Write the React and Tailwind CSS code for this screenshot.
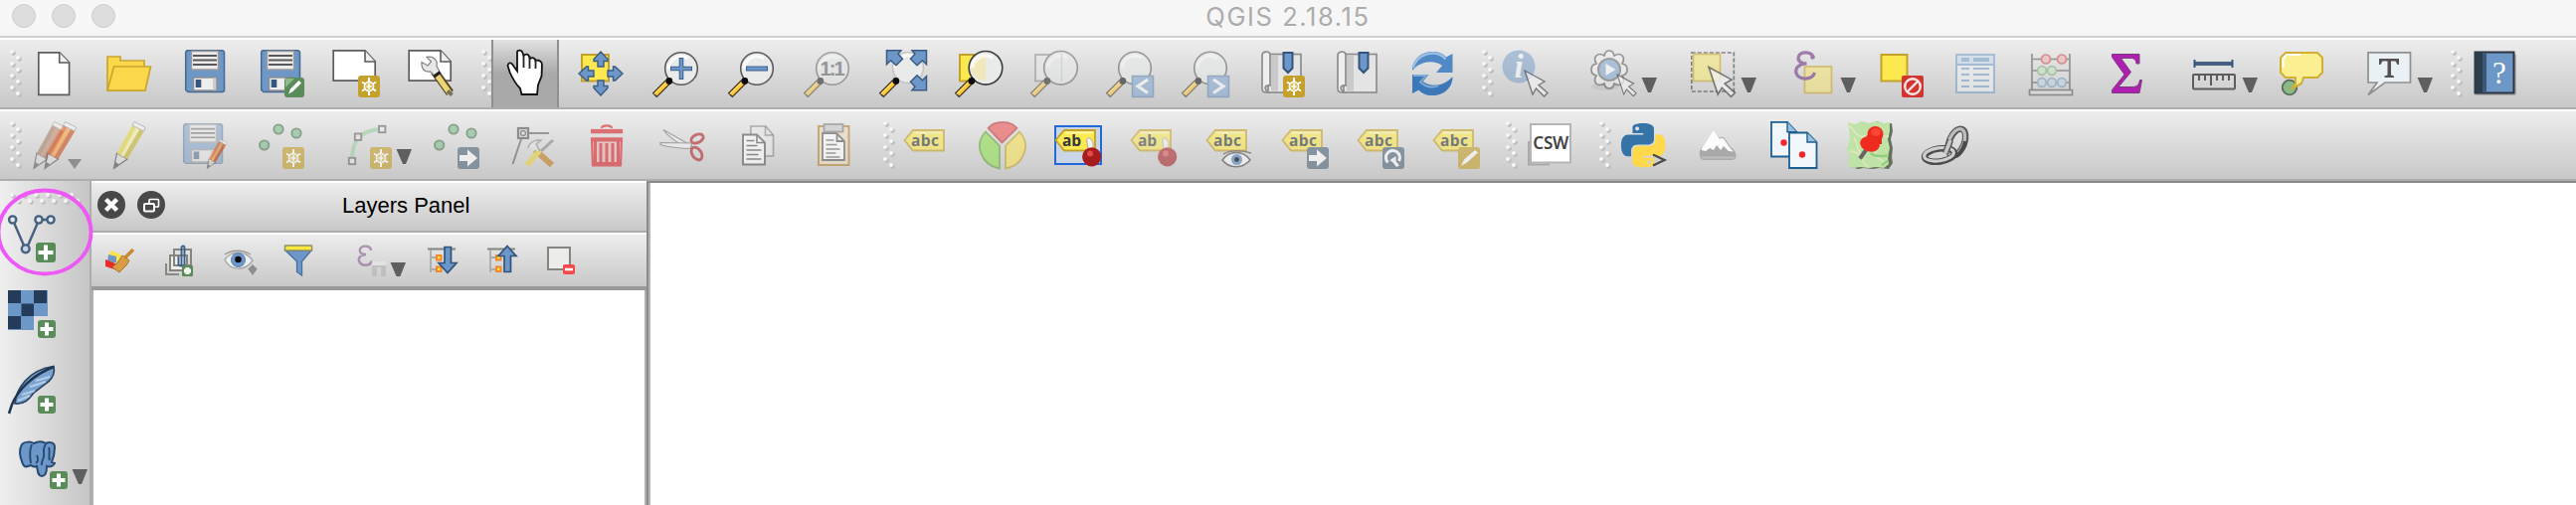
import React from 'react';

/* ---------- building blocks ---------- */

function Icon({ className = '', children }) {
  return (
    <svg viewBox="0 0 48 48" fill="none" className={'h-12 w-12 shrink-0 overflow-visible ' + className}>
      {children}
    </svg>
  );
}

function SmallIcon({ className = '', children }) {
  return (
    <svg viewBox="0 0 32 32" fill="none" className={'h-8 w-8 shrink-0 overflow-visible ' + className}>
      {children}
    </svg>
  );
}

function Dot({ x, y }) {
  return (
    <g>
      <circle cx={x + 3.6} cy={y + 3.6} r="2.2" fill="#bdbdbd" />
      <circle cx={x + 2} cy={y + 2} r="2" fill="#f6f6f6" />
    </g>
  );
}

function Handle({ className = '' }) {
  return (
    <svg viewBox="0 0 12 48" className={'h-12 w-3 shrink-0 ' + className}>
      {[0, 12, 24, 36].map((y) => (
        <g key={y}>
          <Dot x={0} y={y} />
          <Dot x={6} y={y + 6} />
        </g>
      ))}
    </svg>
  );
}

function Arrow({ className = '' }) {
  return (
    <svg viewBox="0 0 16 48" className={'h-12 w-4 shrink-0 ' + className}>
      <path d="M0.5 28h15.500l-6 15h-3z" fill="#5f5f5f" />
    </svg>
  );
}

function PlusBadge({ x = 30, y = 30, s = 18 }) {
  const c = s / 2;
  return (
    <g transform={`translate(${x} ${y})`}>
      <rect width={s} height={s} rx="3" fill="#5a8c5a" />
      <path d={`M${c} 2.5V${s - 2.5}M2.5 ${c}H${s - 2.5}`} stroke="#fff" strokeWidth="4" />
    </g>
  );
}

function StarBadge() {
  return (
    <g>
      <rect x="26" y="26" width="22" height="22" rx="3" fill="#c4a02c" />
      <path d="M37 28v18M30 32.500l14 9M44 32.500l-14 9" stroke="#fff" strokeWidth="2" />
      <circle cx="37" cy="37" r="4.600" stroke="#fff" strokeWidth="1.600" fill="#d8bd55" />
      <path d="M37 34v6M34.500 37h5" stroke="#fff" strokeWidth="1.600" />
    </g>
  );
}

function ArrowBadge() {
  return (
    <g>
      <rect x="26" y="26" width="22" height="22" rx="3" fill="#51687c" />
      <path d="M28 34h8v-5.500l10 8.500l-10 8.500V40h-8z" fill="#fff" />
    </g>
  );
}

function Floppy() {
  return (
    <g>
      <path d="M6 0.800h36l1.500 1.500v39l-1.500 1.200H7L4.700 40.500V2.300z" fill="#6c97c6" stroke="#46698f" strokeWidth="1.500" />
      <rect x="10.500" y="1.500" width="27" height="18.500" fill="#ececec" stroke="#9b9b9b" strokeWidth="1.500" />
      <path d="M12 6h24M12 10.500h24M12 15h24" stroke="#585858" strokeWidth="1.800" />
      <rect x="12.500" y="28" width="23.500" height="13" fill="#eee" stroke="#8e8e8e" strokeWidth="1.500" />
      <rect x="14.700" y="30" width="5.600" height="8" fill="#34577f" />
      <rect x="32" y="28.500" width="3" height="12" fill="#ccc" />
    </g>
  );
}

function Lens({ cx = 29, cy = 19, r = 16.3, dark = '#5a5a5a' }) {
  return (
    <g>
      <path d="M2 46L15.500 32.500" stroke="#3a3020" strokeWidth="6.500" />
      <path d="M3 45L15.500 32.500" stroke="#ffc936" strokeWidth="4" />
      <path d="M1.500 45L14 32.500" stroke="#fff1b0" strokeWidth="0.800" />
      <circle cx={cx} cy={cy} r={r} fill="#e9ebeb" stroke={dark} strokeWidth="1.600" />
      <path d={`M${cx - 13} ${cy}a13 13 0 0 1 20-10`} stroke="#fff" strokeWidth="3" opacity=".8" />
      <circle cx="16.800" cy="31.500" r="3.400" fill="#0b0b0b" />
    </g>
  );
}

function Page() {
  return (
    <g>
      <path d="M1.200 0.800h31.800l10.200 11v19.400H1.200z" fill="#fff" stroke="#5c5c5c" strokeWidth="1.700" />
      <path d="M33 1v11h10" fill="#eee" stroke="#5c5c5c" strokeWidth="1.600" />
    </g>
  );
}

function Pencil({ a = '#e86a2c', b = '#f8a13a', c = '#cc4d1c', tip = '#555' }) {
  return (
    <g>
      <path d="M16 32L26.500 38L13 47.500z" fill="#ddd" stroke={tip} strokeWidth="1.200" />
      <path d="M14.500 41l3.500 2.300l-5 4.200z" fill={tip} />
      <path d="M16 32L31.500 4l4 2.300L20 34.500z" fill={a} />
      <path d="M20 34.500L35.500 6l3.500 2l-16 28z" fill={b} />
      <path d="M22.500 36L39 8l4.200 2.200L26.500 38z" fill={c} />
      <path d="M31.500 4l2-3.500L44.500 6l-1.300 4z" fill="#f2f2f2" stroke="#9a9a9a" strokeWidth="0.900" />
    </g>
  );
}

function Points() {
  return (
    <g fill="#7fc088" stroke="#4f7455" strokeWidth="1.800">
      <circle cx="22" cy="8" r="4.700" />
      <circle cx="40" cy="12" r="4.700" />
      <circle cx="7.700" cy="24" r="4.700" />
    </g>
  );
}

function Tag({ text = 'abc' }) {
  return (
    <g>
      <path d="M1.500 19L10 9h31v20.500H10z" fill="#fce94f" stroke="#c4a02c" strokeWidth="1.800" />
      <path d="M11 11.500h28" stroke="#fff6a8" strokeWidth="2" />
      <text
        x="8"
        y="24.500"
        fontSize="15.500"
        fontWeight="700"
        fill="#33383c"
        textLength={text === 'abc' ? 28 : 19}
        className="font-['Open_Sans',sans-serif]"
      >
        {text}
      </text>
    </g>
  );
}

function Pin() {
  return (
    <g>
      <path d="M32.500 18.500l3-2l3.500 4.500v7h-5z" fill="#f4f4f4" stroke="#999" strokeWidth="0.800" />
      <circle cx="37.700" cy="35.800" r="9.600" fill="#a81c1e" />
      <circle cx="36" cy="32.500" r="3" fill="#e04a48" />
    </g>
  );
}

function Cursor({ x = 0, y = 0, s = 1 }) {
  return (
    <path
      transform={`translate(${x} ${y}) scale(${s})`}
      d="M0 0l20 11l-6 3.500l9 8l-3.500 3.500l-8-8l-3.500 6z"
      fill="#f1f1f1"
      stroke="#555"
      strokeWidth="1.400"
    />
  );
}

function NavArrow({ rotate }) {
  return (
    <path
      transform={`rotate(${rotate} 24 24)`}
      d="M24 2l7 7.500v2h-4V17h-6v-5.500h-4v-2z"
      fill="#6c97c8"
      stroke="#3b5c82"
      strokeWidth="1.400"
    />
  );
}

const CORNER = 'M7.500 .8h14.500l-3 3.500l4.500 5l-6.500 6.500l-5.500-5l-4 4z';

function BookmarkShape() {
  return (
    <g>
      <rect x="11" y="4.500" width="33" height="38.500" fill="#e4e4e4" stroke="#8d8d8d" strokeWidth="1.700" />
      <path d="M14 5.500h7v36h-7z" fill="#c9c9c9" />
      <path d="M5 6c0-5 7-5 8-1.500V36c-5-1-7 3-2 7H9c-3 0-4-2-4-4z" fill="#eee" stroke="#8d8d8d" strokeWidth="1.700" />
      <path d="M26.500 3h9v15.500l-4.500 4.500l-4.500-4.500z" fill="#6c97c8" stroke="#33547c" strokeWidth="2" />
    </g>
  );
}

/* ---------- first toolbar ---------- */

function MainToolbar() {
  return (
    <div className="flex h-[72px] shrink-0 items-center border-t-2 border-b-2 border-t-white border-b-[#adadad] bg-linear-to-b from-[#ededed] to-[#c8c8c8]">
      <Handle className="ml-2.5" />
      <Icon className="ml-2">
        <path d="M8.800 2.800h21l9.800 10v32.500H8.800z" fill="#fff" stroke="#5c5c5c" strokeWidth="1.700" />
        <path d="M29.700 3v10h9.800" fill="#eee" stroke="#5c5c5c" strokeWidth="1.600" />
      </Icon>
      <Icon className="ml-7">
        <path d="M2 41V7h13v4h24v7" fill="#fbd84b" stroke="#c9a52f" strokeWidth="1.700" />
        <path d="M8.500 17h37l-5.500 24.200H2z" fill="#fbd84b" stroke="#c9a52f" strokeWidth="1.700" />
      </Icon>
      <Icon className="ml-7"><Floppy /></Icon>
      <Icon className="ml-7">
        <Floppy />
        <rect x="28" y="28" width="20" height="20" rx="3" fill="#5a8c5a" />
        <path d="M29 38l9-9h-9z" fill="#8fb88f" />
        <path d="M32 44.500l2-5l8.500-8.500l2.500 2.500l-8.500 8.500z" fill="#fff" />
      </Icon>
      <Icon className="ml-7"><Page /><StarBadge /></Icon>
      <Icon className="ml-7">
        <Page />
        <path d="M27 22L42.500 43.500" stroke="#554a28" strokeWidth="8.500" />
        <path d="M29.500 26L42 43.500" stroke="#ecd472" strokeWidth="5.500" />
        <path d="M40 41.500l4.500 4" stroke="#77705a" strokeWidth="4" />
        <path d="M14 12.500l6 3.500l3.500-4l-4.500-4.500c7-1.500 11.500 3 10 9l3.500 6.500l-5 3.500l-5-4.500c-5 1-9-2.500-8.500-9.500z" fill="#e8e8e8" stroke="#888" strokeWidth="1.300" />
        <path d="M26.500 27l6-4.500" stroke="#222" strokeWidth="3" />
      </Icon>
      <div className="ml-[26px] w-[10px] shrink-0 overflow-hidden"><Handle /></div>
      <div className="flex h-[68px] w-[68px] shrink-0 items-center justify-center border-x-2 border-[#8f8f8f] bg-linear-to-b from-[#e2e2e2] via-[#a9a9a9] to-[#a9a9a9]">
        <Icon>
          <path
            d="M6.500 16c.5-3 3-3.500 4.500-1.500l5 7V2.500c0-2.500 4.500-2.500 5.500.5l1 3c2-2.500 5-1.500 5.500 1l1 2c2-1.500 5-1 5.500 2c3-1 6.500 0 6.500 4.500l-.5 11l-3.500 9l-1 9.500H20.500l-1.500-6C14 34 10.500 27 8.500 22.500z"
            fill="#fff" stroke="#111" strokeWidth="1.800"
          />
          <path d="M22.500 5v13M28.500 6v13M34.500 9v10" stroke="#222" strokeWidth="1.800" />
        </Icon>
      </div>
      <Icon className="ml-[18px]">
        <rect x="5" y="5" width="27" height="26.500" fill="#fce94f" stroke="#c4a02c" strokeWidth="2" />
        <NavArrow rotate={0} /><NavArrow rotate={90} /><NavArrow rotate={180} /><NavArrow rotate={270} />
      </Icon>
      <Icon className="ml-7">
        <Lens />
        <path d="M29 8v22M18 19h22" stroke="#3b5f8c" strokeWidth="4.600" />
        <path d="M29 9v20M19 19h20" stroke="#6c97c8" strokeWidth="2.600" />
      </Icon>
      <Icon className="ml-7">
        <Lens />
        <path d="M18 19h22" stroke="#3b5f8c" strokeWidth="5" />
        <path d="M19 19h20" stroke="#6c97c8" strokeWidth="3" />
      </Icon>
      <Icon className="ml-7">
        <g opacity=".5">
          <Lens />
          <text x="29" y="25.500" textAnchor="middle" fontSize="20" fontWeight="700" fill="#4c5154" textLength="25" className="font-['Liberation_Sans',sans-serif]">1:1</text>
        </g>
      </Icon>
      <Icon className="ml-7">
        <Lens cx={29} cy={18} r={15.5} dark="#c4c4c4" />
        <g fill="#6c97c8" stroke="#3b5c82" strokeWidth="1.500">
          <path d={CORNER} />
          <path transform="translate(55 0) scale(-1 1)" d={CORNER} />
          <path transform="translate(55 41.500) scale(-1 -1)" d={CORNER} />
        </g>
      </Icon>
      <Icon className="ml-7">
        <rect x="5" y="5" width="24" height="26.500" fill="#fce94f" stroke="#c4a02c" strokeWidth="2" />
        <Lens cx={31} cy={18.3} r={16.8} dark="#3c3c3c" />
        <path d="M16 19a15 15 0 0 1 15-14.500V31A14 14 0 0 1 16 19z" fill="#f0e8bb" />
        <path d="M17.500 18a13 13 0 0 1 13-12" stroke="#fff" strokeWidth="4" opacity=".7" />
      </Icon>
      <Icon className="ml-7">
        <g opacity=".5">
          <rect x="5" y="5" width="24" height="26.500" fill="#e8e8e8" stroke="#777" strokeWidth="1.600" />
          <Lens cx={30.5} cy={18.3} r={16.8} />
          <path d="M31.500 4v28" stroke="#c8c8c8" strokeWidth="1.400" />
        </g>
      </Icon>
      <Icon className="ml-7">
        <g opacity=".55">
          <Lens cy={18.5} />
          <rect x="26.500" y="26.500" width="21" height="21" fill="#7fa6d3" stroke="#5e83ad" strokeWidth="1.500" />
          <path d="M42 30l-10 6.800l10 6.700" stroke="#fff" strokeWidth="3.200" />
        </g>
      </Icon>
      <Icon className="ml-7">
        <g opacity=".55">
          <Lens cy={18.5} />
          <rect x="26.500" y="26.500" width="21" height="21" fill="#7fa6d3" stroke="#5e83ad" strokeWidth="1.500" />
          <path d="M32 30l10 6.800l-10 6.700" stroke="#fff" strokeWidth="3.200" />
        </g>
      </Icon>
      <Icon className="ml-7"><BookmarkShape /><StarBadge /></Icon>
      <Icon className="ml-7"><BookmarkShape /></Icon>
      <Icon className="ml-7">
        <path d="M4 21C4 9 14 2 24 2c7 0 11 2 14 5.500l6.500-3.500v19H28l6-7c-8-6-22-5-30 5z" fill="#5089c6" />
        <path d="M4.500 18C8 8 17 3 26 3.500c5 .5 9 3 11.500 6" stroke="#9cc0e4" strokeWidth="2.500" />
        <path d="M44.500 27C44.500 39 35 46 24.500 46c-7 0-11-2-14-5.500L4 44V25h16.500l-6 7c8 6 22 5 30-5z" fill="#3c77b8" />
        <path d="M5 26h13l-6 6.500c5 4.500 12 6 18 4" stroke="#81abd8" strokeWidth="1.800" />
      </Icon>
      <Handle className="ml-[26px]" />
      <Icon className="ml-2">
        <g opacity=".48">
          <circle cx="17" cy="17" r="16.500" fill="#6c97c8" />
          <text x="17" y="28" textAnchor="middle" fontSize="33" fontWeight="700" fontStyle="italic" fill="#fff" className="font-['Liberation_Serif',serif]">i</text>
        </g>
        <g opacity=".7"><Cursor x={23} y={21} /></g>
      </Icon>
      <Icon className="ml-10">
        <ellipse cx="16" cy="37" rx="14" ry="4" fill="#999" opacity=".2" />
        <g opacity=".55">
          <path d="M20 1q4 0 5 5q5-3 8 0q3 3 0 8q5 1 5 6t-5 6q3 5 0 8q-3 3-8 0q-1 5-5 5t-5-5q-5 3-8 0q-3-3 0-8q-5-1-5-6t5-6q-3-5 0-8q3-3 8 0q1-5 5-5z" fill="#f2f2f2" stroke="#555" strokeWidth="1.700" />
          <circle cx="20" cy="20" r="11" fill="#7fa6d3" stroke="#666" strokeWidth="2" />
          <path d="M16.500 14l10 6l-10 6z" fill="#fff" />
        </g>
        <g opacity=".7"><Cursor x={28} y={25} s={0.83} /></g>
      </Icon>
      <Arrow className="ml-1" />
      <Icon className="ml-8">
        <g opacity=".6">
          <rect x="2.800" y="3" width="42.500" height="39" stroke="#444" strokeWidth="1.700" strokeDasharray="4 2" />
          <rect x="4.500" y="4.500" width="27" height="27" fill="#f5e878" stroke="#c9a52f" strokeWidth="1.700" />
        </g>
        <g opacity=".75"><Cursor x={20} y={17.5} s={1.15} /></g>
      </Icon>
      <Arrow className="ml-1" />
      <Icon className="ml-8">
        <g opacity=".6">
          <rect x="16.500" y="17" width="27" height="26.500" fill="#f3e47c" stroke="#c9a52f" strokeWidth="1.700" />
          <path d="M25 8c-.5-6-12-7-14.500-1.500c-2 5 3 7.500 8 7.500c-7 0-12 4-10.500 9.500C10 31 24 31 26.500 23" stroke="#6f3b82" strokeWidth="3.200" />
          <circle cx="24.500" cy="7.500" r="2.300" fill="#6f3b82" />
        </g>
      </Icon>
      <Arrow className="ml-1" />
      <Icon className="ml-[22px]">
        <rect x="3.500" y="5" width="26" height="26.500" fill="#fce94f" stroke="#c4a02c" strokeWidth="2" />
        <rect x="24" y="26" width="22" height="22" rx="2" fill="#d3342f" />
        <circle cx="35" cy="37" r="7.800" fill="#d3342f" stroke="#fbe9e8" strokeWidth="2.400" />
        <path d="M30 42l10-10" stroke="#fbe9e8" strokeWidth="2.400" />
      </Icon>
      <Icon className="ml-[26px]">
        <g opacity=".5">
          <rect x="5" y="5" width="38" height="38" fill="#eef2f6" stroke="#6c97c8" strokeWidth="2" />
          <rect x="6" y="6" width="36" height="8.500" fill="#c5dcee" />
          <path d="M5 15h38" stroke="#6c97c8" strokeWidth="2" />
          <path d="M10 10h8M22 10h16" stroke="#6c97c8" strokeWidth="4" />
          <path d="M10 19h8M22 19h16M10 25h8M22 25h16M10 31h8M22 31h16M10 37h8M22 37h16" stroke="#6c97c8" strokeWidth="2" />
        </g>
      </Icon>
      <Icon className="ml-7">
        <g opacity=".55" strokeWidth="1.700">
          <path d="M5 4v37M43 4v37M5 9.500h38M5 21h38M5 33h38" stroke="#555" />
          <rect x="2.500" y="40.500" width="43" height="5" fill="#ddd" stroke="#555" />
          <g fill="#f3b0b0" stroke="#c84a4a"><circle cx="19" cy="9.500" r="4.500" /><circle cx="35" cy="9.500" r="4.500" /></g>
          <g fill="#bfe4bf" stroke="#7cad7c"><circle cx="15" cy="21" r="4.300" /><circle cx="25" cy="21" r="4.300" /></g>
          <g fill="#bdd4e8" stroke="#7596b4"><circle cx="15" cy="33" r="4.300" /><circle cx="25" cy="33" r="4.300" /><circle cx="35" cy="33" r="4.300" /></g>
        </g>
      </Icon>
      <Icon className="ml-7">
        <path d="M9.500 4.500H37v9.500h-3c-.5-4-2-5.500-6-5.500H18.500l10 14L16 37.500h14c5 0 6.500-2.500 7.500-7h2L37 43.500H9.500v-3L22 25L9.500 7.500z" fill="#b020ae" stroke="#7a3a80" strokeWidth="1" />
      </Icon>
      <Icon className="ml-10">
        <path d="M4.500 14h38" stroke="#455f80" strokeWidth="4" />
        <path d="M4.500 10v8M42.500 10v8" stroke="#34557c" strokeWidth="2" />
        <rect x="3" y="25" width="42" height="14.500" rx="1" stroke="#5c5c5c" strokeWidth="2" />
        <path d="M9 25v6M15 25v6M21 25v11M27 25v6M33 25v6M39 25v6" stroke="#5c5c5c" strokeWidth="2" />
      </Icon>
      <Arrow className="ml-1" />
      <Icon className="ml-5">
        <circle cx="12" cy="38" r="7.300" fill="#8ab886" stroke="#5a6d5a" strokeWidth="1.800" />
        <path d="M8 3h32l5 5v15l-5 5H26l-2 6l-10 5l4-5v-6H8l-5-5V8z" fill="#fbef92" stroke="#d2ae31" strokeWidth="2" strokeLinejoin="round" />
        <path d="M5.500 18V9l3.500-4h14" stroke="#fff" strokeWidth="2" />
      </Icon>
      <Icon className="ml-10">
        <path d="M3 2.800h42.500V33H20L3 45.500L12 33H3z" fill="#e9f1f4" stroke="#8f8f8f" strokeWidth="1.700" />
        <path d="M14 9h20v6h-1.500l-2-3.500H26v14l3 1v1.500H19.500V26.500l3-1v-14h-5l-2 3.500H14z" fill="#555152" />
      </Icon>
      <Arrow className="ml-1" />
      <Handle className="ml-[18px]" />
      <Icon className="ml-2">
        <rect x="4" y="4" width="42" height="42" rx="2" fill="#888" opacity=".55" />
        <rect x="4.500" y="2.500" width="39" height="41" fill="#6c97c6" stroke="#2b3440" strokeWidth="2" />
        <rect x="4.500" y="2.500" width="7.500" height="41" fill="#2b3e4e" />
        <rect x="12" y="3.500" width="4" height="39" fill="#3c5876" />
        <text x="29" y="33.500" textAnchor="middle" fontSize="31" fill="#fff" className="font-['Liberation_Serif',serif]">?</text>
      </Icon>
    </div>
  );
}

/* ---------- second toolbar ---------- */

function EditToolbar() {
  return (
    <div className="flex h-[72px] shrink-0 items-center border-t-2 border-b-2 border-t-white border-b-[#adadad] bg-linear-to-b from-[#ededed] to-[#c8c8c8]">
      <Handle className="ml-2.5" />
      <Icon className="ml-2.5">
        <g transform="translate(-11 0)" opacity=".55"><Pencil a="#a07a60" b="#c98563" c="#b3644a" /></g>
        <g opacity=".6"><Pencil /></g>
        <path d="M36 38h14l-7 10z" fill="#8f8f8f" />
      </Icon>
      <Icon className="ml-[26px]">
        <g opacity=".65" transform="translate(-4.500 0)"><Pencil a="#e6d84a" b="#f7f0a8" c="#c8b83c" /></g>
      </Icon>
      <Icon className="ml-7">
        <g opacity=".45" transform="translate(-2 2) scale(1 .95)"><Floppy /></g>
        <g opacity=".65" transform="translate(18 17.500) scale(.63)"><Pencil /></g>
      </Icon>
      <Icon className="ml-7"><g opacity=".6"><Points /><StarBadge /></g></Icon>
      <Icon className="ml-10">
        <g opacity=".6">
          <path d="M8 40c0-22 8-31 30-32" stroke="#9fd0a4" strokeWidth="4" />
          <g fill="#e8e8e8" stroke="#666" strokeWidth="1.800">
            <rect x="4.800" y="36.800" width="6.400" height="6.400" /><rect x="10.800" y="12.500" width="6.400" height="6.400" /><rect x="35" y="4.800" width="6.400" height="6.400" />
          </g>
          <StarBadge />
        </g>
      </Icon>
      <Arrow className="ml-1" />
      <Icon className="ml-5"><g opacity=".6"><Points /><ArrowBadge /></g></Icon>
      <Icon className="ml-[30px]">
        <g opacity=".6">
          <path d="M20 12h20M12 18L3.500 43" stroke="#666" strokeWidth="2" />
          <rect x="9" y="7" width="10" height="10" fill="#ddd" stroke="#555" strokeWidth="2.200" />
          <circle cx="14" cy="12" r="2.500" stroke="#666" strokeWidth="1.500" />
          <path d="M26 29L43 44" stroke="#c47c20" strokeWidth="6" />
          <path d="M18 44l13-15" stroke="#ead23c" strokeWidth="5.500" />
          <path d="M32 30l12-11" stroke="#888" strokeWidth="3" />
          <path d="M19 27c1-6 8-9 13-8l-5 4l4 7" fill="#e4e4e4" stroke="#999" strokeWidth="1.700" />
        </g>
      </Icon>
      <Icon className="ml-[26px]">
        <g opacity=".72" stroke="#d94346" strokeWidth="2.200">
          <path d="M19 7c0-3.500 10-3.500 10 0" />
          <rect x="9" y="9" width="30" height="2.200" fill="#d94346" />
          <path d="M9 17.300h30L38 44.300H10z" fill="#e6bcbc" />
          <path d="M12.500 18v26M18 22v19M24 22v19M30 22v19M35.500 18v26" strokeWidth="3" />
          <path d="M10 42.500h28M9 19h30" strokeWidth="3" />
        </g>
      </Icon>
      <Icon className="ml-7">
        <g opacity=".7">
          <path d="M5 8.500L33 24.500l-4 3C20 22 9 15 5 8.500z" fill="#eee" stroke="#888" strokeWidth="1.200" />
          <path d="M2 21.500L34 22l-2 5.500C20 27 9 26 2 23.500z" fill="#eee" stroke="#888" strokeWidth="1.200" />
          <ellipse cx="39" cy="17.500" rx="6.500" ry="4" transform="rotate(-25 39 17.500)" stroke="#b54040" strokeWidth="2.800" />
          <ellipse cx="38.500" cy="32.500" rx="7" ry="4.500" transform="rotate(55 38.500 32.500)" stroke="#b54040" strokeWidth="2.800" />
        </g>
      </Icon>
      <Icon className="ml-7">
        <g opacity=".6" stroke="#555" strokeWidth="1.600">
          <path d="M16.800 5h15l7.700 9v21H16.800z" fill="#eee" opacity=".65" />
          <path d="M31.500 5v9h8" opacity=".65" />
          <path d="M9 13.500h14l8 8v22H9z" fill="#fff" strokeWidth="1.900" />
          <path d="M23 13.500v8h8" />
          <path d="M12.500 19.500h8M12.500 24.500h11M12.500 29h15M12.500 33.500h12M12.500 38h15" />
        </g>
      </Icon>
      <Icon className="ml-7">
        <g opacity=".65" strokeWidth="1.800">
          <rect x="9" y="5" width="30.500" height="39" fill="#eddcc0" stroke="#b98a45" strokeWidth="2" />
          <path d="M13 12h14l8 8v19H13z" fill="#fff" stroke="#666" />
          <path d="M27.500 12v8H35" stroke="#666" />
          <rect x="14.500" y="3" width="19" height="7.500" fill="#ccc" stroke="#888" />
          <path d="M16.500 19h8M16.500 23.500h11M16.500 28h14M16.500 32h10M16.500 36h14" stroke="#777" strokeWidth="1.400" />
        </g>
      </Icon>
      <Handle className="ml-[26px]" />
      <Icon className="ml-[8px]"><g opacity=".6"><Tag /></g></Icon>
      <Icon className="ml-7">
        <g opacity=".65" strokeWidth="1.800">
          <path d="M23.500 21.500L9.500 7C16-1 32-1 38.500 7z" fill="#ee6060" stroke="#c04848" />
          <path d="M21 24.500v23C2 44-5 23 7 10.500z" fill="#96e05c" stroke="#70a84a" />
          <path d="M27 24.500v23C46 44 53 23 41 10.500z" fill="#f5e264" stroke="#c4aa3c" />
        </g>
      </Icon>
      <Icon className="ml-7">
        <rect x="1" y="5" width="46" height="38" fill="#cad6e6" stroke="#2468da" strokeWidth="2" />
        <Tag text="ab" /><Pin />
      </Icon>
      <Icon className="ml-7"><g opacity=".55"><Tag text="ab" /><Pin /></g></Icon>
      <Icon className="ml-7">
        <g opacity=".6"><Tag /></g>
        <g opacity=".75">
          <path d="M17 39c7-10 21-10 28 0c-7 8-20 10-28 0z" fill="#f2f2f2" stroke="#666" strokeWidth="1.500" />
          <path d="M18 33c7-4 18-4 28-1" stroke="#777" strokeWidth="1.500" />
          <circle cx="31.500" cy="38.500" r="5.500" fill="#6c97c8" />
          <circle cx="31.500" cy="38.500" r="2.400" fill="#222" />
        </g>
      </Icon>
      <Icon className="ml-7"><g opacity=".6"><Tag /><ArrowBadge /></g></Icon>
      <Icon className="ml-7">
        <g opacity=".6">
          <Tag />
          <rect x="26" y="26" width="22" height="22" rx="3" fill="#51687c" />
          <path d="M31.500 41.500a7 7 0 1 1 11-1.500" stroke="#fff" strokeWidth="3" />
          <path d="M33.500 39l6-4v5l3.500 4.500l-3 1.500l-3-4z" fill="#fff" />
        </g>
      </Icon>
      <Icon className="ml-7">
        <g opacity=".6">
          <Tag />
          <rect x="26" y="26" width="22" height="22" rx="3" fill="#c4a02c" />
          <path d="M29 45l3-6.500l11-9.500l3 2.500l-11 10z" fill="#fff" />
        </g>
      </Icon>
      <Handle className="ml-[26px]" />
      <Icon className="ml-2">
        <path d="M3 20v23.500h21" stroke="#aaa" strokeWidth="2" />
        <rect x="5" y="3" width="40" height="38.500" fill="#fff" stroke="#b5b5b5" strokeWidth="2" />
        <text x="25.300" y="27.500" textAnchor="middle" fontSize="17" fontWeight="600" fill="#444" textLength="36" className="font-['Noto_Sans',sans-serif]">CSW</text>
      </Icon>
      <Handle className="ml-[26px]" />
      <Icon className="ml-2">
        <g transform="translate(2 2) scale(1.850)">
          <path d={SNAKE} fill="#3674a8" />
          <path d={SNAKE} fill="#ffd94a" transform="rotate(180 12 12)" />
        </g>
        <path d="M34 33.500l11.500 5.500L34 44.500" stroke="#4a4a4a" strokeWidth="2.300" />
      </Icon>
      <Icon className="ml-7">
        <path d="M5 35c-1-5 1-8 5-12l7-11c1.500-2.500 3-2.500 4.500 0l3.500 5c2-2 4-1.500 5.500 1l5.500 8c4 3 5.500 5 5.500 9c0 2.500-2 4-4 4H9c-2 0-3.500-1.500-4-4z" fill="#a9a9a9" />
        <path d="M6.500 29c1-4 3.500-6 5-8.500l5.500-9c1-2 3-2 4 0l4 6.500c2-2 3.500-1.500 5 1l5.500 8l3.500 3.500l-5-.5l-5-5l-3 4l-4-5l-3 5l-4-2l-4 3z" fill="#fcfcfc" />
        <path d="M8 36.500h31" stroke="#c0c0c0" strokeWidth="2" strokeLinecap="round" />
      </Icon>
      <Icon className="ml-7">
        <path d="M1 .8h16l9.500 10V35.500H1z" fill="#f1f6fa" stroke="#1e5f90" strokeWidth="1.800" />
        <path d="M17 .8v10h9.500" fill="#9bbfdc" stroke="#1e5f90" strokeWidth="1.400" />
        <circle cx="13.500" cy="21.500" r="3.200" fill="#f0282b" />
        <path d="M19 11.500h18l9.500 9.500v26H19z" fill="#f1f6fa" stroke="#1e5f90" strokeWidth="1.800" />
        <path d="M37 11.500v9.500h9.500" fill="#9bbfdc" stroke="#1e5f90" strokeWidth="1.400" />
        <circle cx="32" cy="33.500" r="3.200" fill="#f0282b" />
      </Icon>
      <Icon className="ml-7">
        <path d="M4 3l6 1l6-3l8 2l7-3l8 3l7-1l1 8l-2 8l2 9l-1 9l1 6l-4 6l-9-1l-7 1l-9-1l-6 1l-7-2l1-10l-2-8l3-10z" fill="#66705c" />
        <path d="M2 1l7 2l6-3l8 2l7-2l8 2l6-1v9l-2 8l2 9l-2 9l1 7l-5 4l-8-1l-7 1l-9-1l-6 1l-6-2l1-9l-2-8l3-11z" fill="#bfe3a6" />
        <path d="M3 4c10 10 8 14 20 10s8 3 20 1M4 30c12 0 10 10 18 16M30 30c-2 6 6 8 10 14M8 16c4 6 2 12 8 18" stroke="#dfe6be" strokeWidth="1.800" />
        <path d="M25 32c4 5 12 2 18 3M36 44l6-4" stroke="#8fce7c" strokeWidth="2.500" />
        <path d="M20 29l-6 8.500" stroke="#666" strokeWidth="4" />
        <circle cx="29.500" cy="13" r="8" fill="#ee2b1e" />
        <path d="M21 14h15v9H19z" fill="#e82a1d" />
        <ellipse cx="24" cy="23" rx="10" ry="7.500" transform="rotate(15 24 23)" fill="#ee2b1e" />
        <ellipse cx="30" cy="11" rx="5" ry="4" fill="#fb4636" />
      </Icon>
      <Icon className="ml-7">
        <ellipse cx="35.500" cy="21" rx="7.500" ry="14" transform="rotate(22 35.500 21)" stroke="#5a5a5a" strokeWidth="6.500" />
        <ellipse cx="35" cy="21" rx="7.500" ry="14" transform="rotate(22 35 21)" stroke="#bdbdbd" strokeWidth="3.200" />
        <path d="M44 20c-1 7-5 12-9 15" stroke="#4a4a4a" strokeWidth="4" />
        <ellipse cx="18" cy="34" rx="15" ry="6.500" transform="rotate(-8 18 34)" stroke="#4c4c4c" strokeWidth="6.500" />
        <ellipse cx="17.500" cy="33.300" rx="15" ry="6.500" transform="rotate(-8 17.500 33.300)" stroke="#cfcfcf" strokeWidth="3.200" />
        <path d="M24 32l5-13" stroke="#5a5a5a" strokeWidth="6.500" />
        <path d="M24 32l5-13" stroke="#c8c8c8" strokeWidth="3.500" />
      </Icon>
    </div>
  );
}

const SNAKE =
  'M14.250.18l.9.2.73.26.59.3.45.32.34.34.25.34.16.33.1.3.04.26.02.2-.01.13V8.500l-.05.63-.13.55-.21.46-.26.38-.3.31-.33.25-.35.19-.35.14-.33.1-.3.07-.26.04-.21.02H8.770l-.69.05-.59.14-.5.22-.41.27-.33.32-.27.35-.2.36-.15.37-.1.35-.07.32-.04.27-.02.21v3.060H3.170l-.21-.03-.28-.07-.32-.12-.35-.18-.36-.26-.36-.36-.35-.46-.32-.59-.28-.73-.21-.88-.14-1.050-.05-1.230.06-1.220.16-1.040.24-.87.32-.71.36-.57.4-.44.42-.33.42-.24.4-.16.36-.1.32-.05.24-.01h.16l.06.01h8.160v-.83H6.180l-.01-2.750-.02-.37.05-.34.11-.31.17-.28.25-.26.31-.23.38-.2.44-.18.51-.15.58-.12.64-.1.71-.06.77-.04.84-.02 1.270.05zm-6.300 1.980l-.23.33-.08.41.08.41.23.34.33.22.41.09.41-.09.33-.22.23-.34.08-.41-.08-.41-.23-.33-.33-.22-.41-.09-.41.09z';

/* ---------- left side ---------- */

function SideToolbar() {
  return (
    <div className="relative flex w-[92px] shrink-0 flex-col border-r-2 border-[#adadad] bg-linear-to-r from-[#efefef] to-[#c6c6c6]">
      <svg viewBox="0 0 72 12" className="mt-3 ml-2.5 h-3 w-[72px] shrink-0">
        {[0, 12, 24, 36, 48, 60].map((x) => (
          <g key={x}>
            <Dot x={x} y={0} />
            <Dot x={x + 6} y={6} />
          </g>
        ))}
      </svg>
      <div className="mt-2.5 ml-2 flex flex-col gap-7">
        <Icon>
          <g stroke="#466080" strokeWidth="2.400">
            <path d="M6.500 9L16 31M20 31L29.500 9M35 5h4" />
            <circle cx="4.700" cy="5" r="3.600" fill="#dfe5eb" />
            <circle cx="31" cy="5" r="3.600" fill="#dfe5eb" />
            <circle cx="43" cy="5" r="3.600" fill="#dfe5eb" />
            <circle cx="17.700" cy="34.300" r="3.900" fill="#c7d3de" />
          </g>
          <PlusBadge x={28} y={28} s={20} />
        </Icon>
        <Icon>
          <path d="M0 0h40v26H26v14H0z" fill="#6c97c6" />
          <path d="M0 0h13v13H0zM26 0h13v13H26zM13.500 13.500h12.500v12.500H13.500zM0 26h13v13H0z" fill="#243c59" />
          <PlusBadge />
        </Icon>
        <Icon>
          <path d="M46 0.500c1 5-.5 11-5 15L26 27c-5 7-10 12-19 11C8 24 20 4 46 .5z" fill="#7ba3d0" stroke="#2c4766" strokeWidth="1.700" />
          <path d="M10 35l12-5M14 29l13-4M22 21l16-5M28 15l14-4" stroke="#b4cde8" strokeWidth="2" />
          <path d="M46 1C25 9 10 24 4 39l-3 9" stroke="#1f3550" strokeWidth="2.500" />
          <PlusBadge />
        </Icon>
        <div className="ml-3 flex">
          <Icon>
            <path d="M2 3C5 0 11 0 14 2c4-2 9-2 12 0c4-2 9-1 9 4c0 6-1 10-3 15l3 1c-1 3-5 4-8 3c0 5-1 10-5 10s-4-5-5-10c-3 1-5 0-6-1C8 25 5 27 3 23C0 16-1 8 2 3z" fill="#6c97c8" stroke="#264b73" strokeWidth="2" />
            <path d="M12 3c-3 7-2 13-1 19M26 3c-4 5-1 8-2 12c-.5 4-3 6-2 9M16 22c2-1 3-4 1-8M29 6c2 4-1 9 1 13" stroke="#264b73" strokeWidth="1.900" />
            <PlusBadge />
          </Icon>
          <Arrow className="ml-1" />
        </div>
      </div>
      <svg viewBox="0 0 96 92" fill="none" className="absolute top-[5px] left-0 z-10 h-[92px] w-[96px]">
        <ellipse cx="45" cy="46.500" rx="46.500" ry="42" stroke="#ee58f6" strokeWidth="3.800" />
      </svg>
    </div>
  );
}

function TreeLines() {
  return (
    <g>
      <path d="M0 4.500h28" stroke="#85857d" strokeWidth="2" />
      <path d="M3 5v23M3 13h6M3 25h6" stroke="#aaa" strokeWidth="1.800" />
      <rect x="9" y="11" width="4.500" height="4.500" fill="#fbe83c" stroke="#f3862a" strokeWidth="2" />
      <rect x="9" y="22.500" width="4.500" height="4.500" fill="#fbe83c" stroke="#f3862a" strokeWidth="2" />
    </g>
  );
}

function LayersPanel() {
  return (
    <div className="flex w-[558px] shrink-0 flex-col">
      <div className="flex h-[52px] shrink-0 items-center border-t-2 border-b-2 border-t-white border-b-[#adadad] bg-linear-to-b from-[#ededed] to-[#c8c8c8]">
        <svg viewBox="0 0 28 28" fill="none" className="mb-1 ml-1.5 h-7 w-7 shrink-0">
          <circle cx="14" cy="14" r="14" fill="#484848" />
          <path d="M8.500 8.500l11 11M19.500 8.500l-11 11" stroke="#fff" strokeWidth="4.400" />
        </svg>
        <svg viewBox="0 0 28 28" fill="none" className="mb-1 ml-3 h-7 w-7 shrink-0">
          <circle cx="14" cy="14" r="14" fill="#484848" />
          <rect x="12" y="8.500" width="9.500" height="7.500" rx="1" stroke="#fff" strokeWidth="1.700" />
          <rect x="7" y="13" width="10" height="7.500" rx="1" fill="#484848" stroke="#fff" strokeWidth="2" />
        </svg>
        <span className="mb-0.5 ml-[178px] font-['Liberation_Sans',sans-serif] text-[22px] leading-none whitespace-nowrap text-black">Layers Panel</span>
      </div>
      <div className="flex h-[58px] shrink-0 items-center border-t-2 border-b-4 border-t-white border-b-[#9a9a9a] bg-linear-to-b from-[#ededed] to-[#c8c8c8]">
        <SmallIcon className="ml-3">
          <path d="M8 6l11 5l-5 8L4 13z" fill="#fbe24a" />
          <path d="M5 10l8 2v6H4z" fill="#6c97c8" />
          <path d="M2 15l10 4l-1 6l-9-3z" fill="#e92c24" />
          <path d="M30 5l-8 8" stroke="#c58a34" strokeWidth="3.400" />
          <path d="M19 11l7 5l-3 5l-7 7l-7-5l6-6z" fill="#d79c44" stroke="#ad7326" strokeWidth="1" />
        </SmallIcon>
        <SmallIcon className="ml-7">
          <path d="M3 19v11h13" stroke="#8a8a82" strokeWidth="2" />
          <path d="M7 11h17v15H7z" fill="#eee" stroke="#85857d" strokeWidth="2" />
          <path d="M11 5h17v16H11z" stroke="#85857d" strokeWidth="2" />
          <path d="M18.500 21V3c0-2 3-2 3 0v17c0 2-6 2-6 0v-8" stroke="#3c5f8c" strokeWidth="1.900" />
          <rect x="19" y="21" width="11" height="11" rx="1" fill="#5a8c5a" />
          <path d="M24.500 23v7M21 26.500h7" stroke="#f0f7f0" strokeWidth="4" />
        </SmallIcon>
        <SmallIcon className="ml-7">
          <path d="M2 15c7-9 21-9 28 1c-7 11-23 11-28-1z" fill="#eef0f0" stroke="#aaa" strokeWidth="1.500" />
          <path d="M2 10c7-5 18-5 26 0" stroke="#999" strokeWidth="1.400" />
          <circle cx="15.500" cy="15.500" r="7" fill="#6c97c8" stroke="#5f84ae" />
          <circle cx="15.500" cy="15" r="3.300" fill="#08090c" />
          <path d="M25 24h10l-5 7z M30 20l4 4h-8z" fill="#8e8e8e" />
        </SmallIcon>
        <SmallIcon className="ml-7">
          <path d="M3 6h26L19.500 17v14l-5-3.500V17z" fill="#6c97c8" stroke="#466e9c" strokeWidth="1.300" />
          <rect x="2.500" y="1" width="27" height="5" fill="#fbe83c" stroke="#8b8b68" strokeWidth="1.400" />
        </SmallIcon>
        <SmallIcon className="ml-11">
          <g opacity=".65">
            <path d="M13 6c0-5-9-6-11-1.500c-1 4 2 5.500 6 5.500c-5 0-8 3-7 6.500c2 6 11 5.500 13 0" stroke="#8d6b97" strokeWidth="2.400" />
            <path d="M14 32V17h14v15h-5V23h-4v9z" fill="#b6b6b6" />
            <path d="M14 17h14v4H14z" fill="#e9e9e9" />
          </g>
        </SmallIcon>
        <svg viewBox="0 0 16 32" className="h-8 w-4 shrink-0"><path d="M0.500 18h15.500l-6 15h-3z" fill="#5f5f5f" /></svg>
        <SmallIcon className="ml-[22px]">
          <TreeLines />
          <path d="M17 2.500h6.500v16H29L20 28.500L11 18.500h6z" fill="#6c97c8" stroke="#33547c" strokeWidth="1.700" />
        </SmallIcon>
        <SmallIcon className="ml-7">
          <TreeLines />
          <path d="M17 27.500h6.500v-16H29L20 1.500L11 11.500h6z" fill="#6c97c8" stroke="#33547c" strokeWidth="1.700" />
        </SmallIcon>
        <SmallIcon className="ml-7">
          <rect x="1" y="3" width="22" height="22" fill="#ececea" stroke="#85857d" strokeWidth="2" />
          <rect x="16" y="20" width="12" height="10" rx="2" fill="#f2484b" />
          <path d="M18 25h8" stroke="#fff" strokeWidth="2.600" />
        </SmallIcon>
      </div>
      <div className="min-h-0 flex-1 border-x-2 border-[#b0b0b0] bg-white" />
    </div>
  );
}

function TitleBar() {
  return (
    <div className="grid h-[38px] shrink-0 grid-cols-[1fr_auto_1fr] items-start border-b-2 border-[#cfcfcf] bg-[#f6f6f6]">
      <div className="mt-1 ml-3 flex gap-4">
        <span className="h-6 w-6 rounded-full border border-[#cfcfcf] bg-[#dcdcdc]" />
        <span className="h-6 w-6 rounded-full border border-[#cfcfcf] bg-[#dcdcdc]" />
        <span className="h-6 w-6 rounded-full border border-[#cfcfcf] bg-[#dcdcdc]" />
      </div>
      <span className="mt-1 font-['Inter',sans-serif] text-[25.5px] leading-[26px] tracking-[1.6px] whitespace-nowrap text-[#acacac]">QGIS 2.18.15</span>
      <span />
    </div>
  );
}

export default function App() {
  return (
    <div className="flex h-[508px] w-[2590px] flex-col overflow-hidden bg-white">
      <TitleBar />
      <MainToolbar />
      <EditToolbar />
      <div className="flex min-h-0 flex-1">
        <SideToolbar />
        <LayersPanel />
        <div className="min-w-0 flex-1 border-t-2 border-l-2 border-[#8b8b8b]">
          <div className="h-full border-l-2 border-[#b4b4b4] bg-white" />
        </div>
      </div>
    </div>
  );
}
